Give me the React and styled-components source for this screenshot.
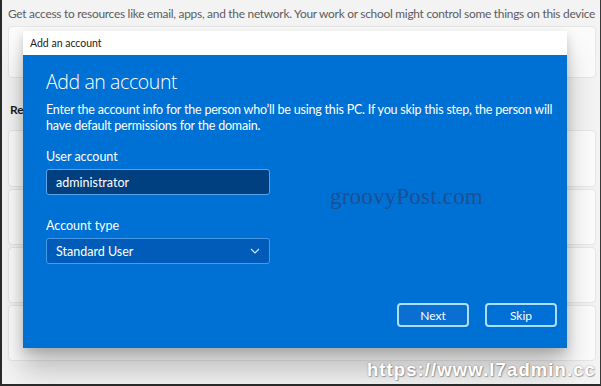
import React from 'react'
import styled, { createGlobalStyle } from 'styled-components'

const GlobalStyle = createGlobalStyle`
  * { box-sizing: border-box; margin: 0; padding: 0; }
  body { margin: 0; background: #2b2b2b; font-family: Lato, "Open Sans", sans-serif; }
`

const Page = styled.div`
  position: relative;
  width: 601px;
  height: 386px;
  overflow: hidden;
  background: #f3f3f3;
  border-left: 2px solid #2a2a2a;
  border-bottom: 2px solid #2a2a2a;
  border-right: 1px solid #3a3a3a;
  padding: 5px 4px 0 6px;
`

const Intro = styled.p`
  font-size: 11.9px;
  letter-spacing: -0.26px;
  color: #5c5c5c;
  white-space: nowrap;
  line-height: 18px;
`

const Card = styled.div`
  height: ${p => p.h}px;
  margin-top: ${p => p.mt || 0}px;
  background: #fbfbfb;
  border: 1px solid #e6e6e6;
  border-radius: 4px;
`

const SectionTitle = styled.h3`
  margin: 24px 0 0 2px;
  font-size: 12px;
  font-weight: 700;
  color: #1b1b1b;
  line-height: 16px;
`

const Rows = styled.div`
  display: flex;
  flex-direction: column;
  gap: 2px;
  margin-top: 12px;
`

const Dialog = styled.div`
  position: absolute;
  left: 21px;
  top: 31px;
  width: 544px;
  height: 317px;
  display: flex;
  flex-direction: column;
  box-shadow: 0 22px 26px rgba(0, 0, 0, 0.22), 0 4px 10px rgba(0, 0, 0, 0.18);
`

const TitleBar = styled.div`
  height: 24px;
  background: #ffffff;
  display: flex;
  align-items: center;
  padding-left: 7px;
  font-size: 10.5px;
  color: #1a1a1a;
`

const Body = styled.div`
  position: relative;
  flex: 1;
  background: #0071d4;
  color: #ffffff;
  padding: 13px 10px 21px 23px;
  display: flex;
  flex-direction: column;
`

const Heading = styled.h1`
  font-family: "Open Sans", "Noto Sans", sans-serif;
  font-size: 19.5px;
  font-weight: 300;
  line-height: 28px;
  letter-spacing: -0.4px;
`

const Text = styled.p`
  margin-top: 6px;
  font-size: 12.5px;
  letter-spacing: -0.2px;
  line-height: 16px;
  white-space: nowrap;
`

const Label = styled.div`
  margin-top: ${p => p.mt}px;
  font-size: 12.5px;
  line-height: 16px;
`

const Field = styled.div`
  margin-top: 4px;
  width: 224px;
  height: 26px;
  border-radius: 3px;
  border: 1.5px solid ${p => (p.select ? '#4a9ae8' : '#5aa3ea')};
  background: ${p => (p.select ? '#005cb8' : '#003f80')};
  display: flex;
  align-items: center;
  justify-content: space-between;
  padding: 0 9px 0 9px;
  font-size: 12.5px;
  color: #ffffff;
`

const Footer = styled.div`
  margin-top: auto;
  display: flex;
  justify-content: flex-end;
  gap: 16px;
`

const Button = styled.button`
  width: 72px;
  height: 24px;
  border: 2px solid #a9e0ff;
  border-radius: 4px;
  background: ${p => (p.primary ? '#0a6fd0' : '#006fd6')};
  color: #ffffff;
  font-family: Lato, "Open Sans", sans-serif;
  font-size: 12px;
`

const Watermark = styled.div`
  position: absolute;
  left: 307px;
  top: 129px;
  font-family: "Liberation Serif", serif;
  font-size: 23px;
  color: #1c4f92;
  letter-spacing: 0.2px;
`

const SiteMark = styled.div`
  position: absolute;
  right: 4px;
  bottom: 3px;
  font-family: "Liberation Sans", Arial, sans-serif;
  font-weight: 700;
  font-size: 18.5px;
  letter-spacing: 1.1px;
  color: #ffffff;
  text-shadow: 0 0 2px rgba(0, 0, 0, 0.35), 1px 1px 1px rgba(0, 0, 0, 0.25);
`

function Chevron() {
  return (
    <svg width="10" height="6" viewBox="0 0 10 6">
      <path d="M1 1 L5 5 L9 1" fill="none" stroke="#cfe6ff" strokeWidth="1.2" />
    </svg>
  )
}

export default function App() {
  return (
    <>
      <GlobalStyle />
      <Page>
        <Intro>Get access to resources like email, apps, and the network. Your work or school might control some things on this device</Intro>
        <Card h={52} mt={3} />
        <SectionTitle>Related settings</SectionTitle>
        <Rows>
          <Card h={57} />
          <Card h={56} />
          <Card h={56} />
          <Card h={56} />
        </Rows>

        <Dialog>
          <TitleBar>Add an account</TitleBar>
          <Body>
            <Heading>Add an account</Heading>
            <Text>
              Enter the account info for the person who’ll be using this PC. If you skip this step, the person will
              <br />
              have default permissions for the domain.
            </Text>
            <Label mt={15}>User account</Label>
            <Field>administrator</Field>
            <Label mt={23}>Account type</Label>
            <Field select>
              Standard User
              <Chevron />
            </Field>
            <Footer>
              <Button primary>Next</Button>
              <Button>Skip</Button>
            </Footer>
            <Watermark>groovyPost.com</Watermark>
          </Body>
        </Dialog>

        <SiteMark>https://www.l7admin.cc</SiteMark>
      </Page>
    </>
  )
}
